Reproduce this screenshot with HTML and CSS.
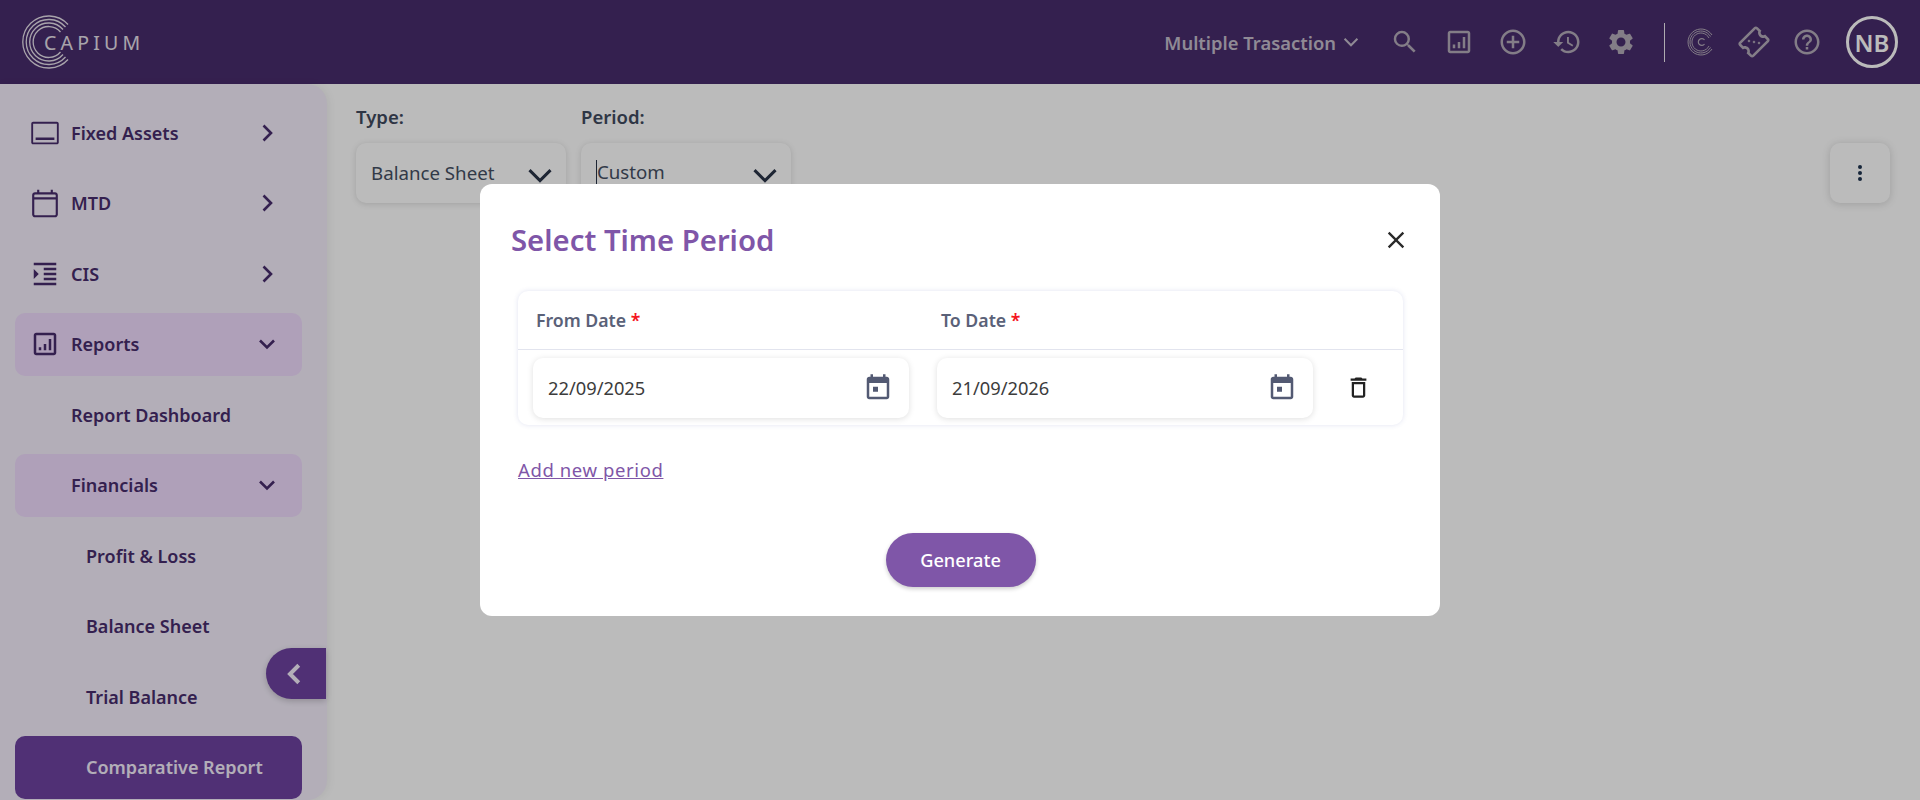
FILE: index.html
```html
<!DOCTYPE html>
<html lang="en">
<head>
    <meta charset="UTF-8">
    <title>Comparative Report</title>
    <link rel="stylesheet" href="styles.css">
</head>
<body>
    <header class="topbar">
        <div class="logo">
            <svg class="logo-rings" viewBox="0 0 54 54" fill="none" stroke="currentColor" stroke-width="1.3">
                <path d="M46 9.500A26 26 0 1 0 46 44.500"/>
                <path d="M43.500 12A22.500 22.500 0 1 0 43.500 42"/>
                <path d="M41 14.500A19 19 0 1 0 41 39.500"/>
                <path d="M38.500 17A15.500 15.500 0 1 0 38.500 37"/>
            </svg>
            <span class="logo-text">CAPIUM</span>
        </div>
        <div class="topbar-right">
            <div class="trans-menu">
                <span>Multiple Trasaction</span>
                <svg viewBox="0 0 24 24" fill="none" stroke="currentColor" stroke-width="2.200"><path d="M5 8.500l7 7 7-7"/></svg>
            </div>
            <div class="top-icons">
                <svg viewBox="0 0 24 24"><path d="M15.500 14h-.79l-.28-.27A6.471 6.471 0 0 0 16 9.500 6.500 6.500 0 1 0 9.500 16c1.610 0 3.090-.59 4.230-1.570l.27.28v.79l5 4.990L20.490 19l-4.990-5zm-6 0C7.010 14 5 11.990 5 9.500S7.010 5 9.500 5 14 7.010 14 9.500 11.990 14 9.500 14z"/></svg>
                <svg viewBox="0 0 24 24"><path d="M19 3H5c-1.100 0-2 .9-2 2v14c0 1.100.9 2 2 2h14c1.100 0 2-.9 2-2V5c0-1.100-.9-2-2-2zm0 16H5V5h14v14zM7 14h2v3H7zm4-2h2v5h-2zm4-4h2v9h-2z"/></svg>
                <svg viewBox="0 0 24 24"><path d="M13 7h-2v4H7v2h4v4h2v-4h4v-2h-4V7zm-1-5C6.480 2 2 6.480 2 12s4.480 10 10 10 10-4.480 10-10S17.520 2 12 2zm0 18c-4.410 0-8-3.590-8-8s3.590-8 8-8 8 3.590 8 8-3.590 8-8 8z"/></svg>
                <svg viewBox="0 0 24 24"><path d="M13 3c-4.970 0-9 4.030-9 9H1l3.890 3.890.07.14L9 12H6c0-3.870 3.130-7 7-7s7 3.130 7 7-3.130 7-7 7c-1.930 0-3.680-.79-4.940-2.060l-1.420 1.420C8.270 19.990 10.510 21 13 21c4.970 0 9-4.030 9-9s-4.030-9-9-9zm-1 5v5l4.280 2.540.72-1.210-3.500-2.080V8H12z"/></svg>
                <svg viewBox="0 0 24 24"><path d="M19.140 12.940c.04-.3.06-.61.06-.94 0-.32-.02-.64-.07-.94l2.030-1.580c.18-.14.23-.41.12-.61l-1.920-3.320c-.12-.22-.37-.29-.59-.22l-2.390.96c-.5-.38-1.030-.7-1.620-.94l-.36-2.540c-.04-.24-.24-.41-.48-.41h-3.840c-.24 0-.43.17-.47.41l-.36 2.540c-.59.24-1.130.57-1.620.94l-2.390-.96c-.22-.08-.47 0-.59.22L2.740 8.870c-.12.21-.08.47.12.61l2.030 1.580c-.05.3-.09.63-.09.94s.02.64.07.94l-2.030 1.580c-.18.14-.23.41-.12.61l1.920 3.320c.12.22.37.29.59.22l2.390-.96c.5.38 1.030.7 1.620.94l.36 2.540c.05.24.24.41.48.41h3.840c.24 0 .44-.17.47-.41l.36-2.540c.59-.24 1.130-.56 1.620-.94l2.390.96c.22.08.47 0 .59-.22l1.920-3.320c.12-.22.07-.47-.12-.61l-2.010-1.580zM12 15.600c-1.980 0-3.600-1.620-3.600-3.600s1.620-3.600 3.600-3.600 3.600 1.620 3.600 3.600-1.620 3.600-3.600 3.600z"/></svg>
            </div>
            <div class="top-divider"></div>
            <div class="top-icons tight">
                <svg viewBox="0 0 30 30" fill="none" stroke="currentColor" stroke-width="1">
                    <path d="M26 8A13 13 0 1 0 26 22"/>
                    <path d="M24.500 9.500A11 11 0 1 0 24.500 20.500"/>
                    <path d="M23 11A9 9 0 1 0 23 19"/>
                    <path d="M18.500 13A3.400 3.400 0 1 0 18.500 17" stroke-width="1.200"/>
                </svg>
                <svg viewBox="0 0 24 24" class="ticket"><path d="M22 10V6c0-1.110-.9-2-2-2H4c-1.100 0-1.990.89-1.990 2v4c1.100 0 1.990.9 1.990 2s-.89 2-2 2v4c0 1.100.9 2 2 2h16c1.100 0 2-.9 2-2v-4c-1.100 0-2-.9-2-2s.9-2 2-2zm-2-1.460c-1.190.69-2 1.990-2 3.460s.81 2.770 2 3.460V18H4v-2.540c1.190-.69 2-1.990 2-3.460 0-1.480-.8-2.770-1.990-3.460L4 6h16v2.540zM9 8h1.600v1.600H9zm2.200 3.200h1.600v1.600h-1.600zm2.200 3.200H15V16h-1.600z"/></svg>
                <svg viewBox="0 0 24 24"><path d="M11 18h2v-2h-2v2zm1-16C6.480 2 2 6.480 2 12s4.480 10 10 10 10-4.480 10-10S17.520 2 12 2zm0 18c-4.410 0-8-3.590-8-8s3.590-8 8-8 8 3.590 8 8-3.590 8-8 8zm0-14c-2.210 0-4 1.790-4 4h2c0-1.100.9-2 2-2s2 .9 2 2c0 2-3 1.750-3 5h2c0-2.250 3-2.500 3-5 0-2.210-1.790-4-4-4z"/></svg>
            </div>
            <div class="avatar">NB</div>
        </div>
    </header>

    <div class="page">
        <aside class="sidebar">
            <a class="nav-item">
                <svg class="nav-icon" viewBox="0 0 24 24"><path d="M21.500 3h-19C1.700 3 1 3.700 1 4.500v15c0 .8.7 1.500 1.500 1.500h19c.8 0 1.500-.7 1.500-1.500v-15C23 3.700 22.300 3 21.500 3zm0 16.500h-19v-15h19v15zM4.500 15.500h15v2h-15z"/></svg>
                <span>Fixed Assets</span>
                <svg class="nav-arrow" viewBox="0 0 24 24"><path d="M8.500 4.500l7.500 7.500-7.500 7.500"/></svg>
            </a>
            <a class="nav-item">
                <svg class="nav-icon" viewBox="1.500 1.500 21 21"><path d="M19 4.500h-1.500V2.700H16v1.800H8V2.700H6.500v1.800H5c-1.100 0-2 .9-2 2V20c0 1.100.9 2 2 2h14c1.100 0 2-.9 2-2V6.500c0-1.100-.9-2-2-2zm.5 15.500c0 .3-.2.500-.5.500H5c-.3 0-.5-.2-.5-.500V9.500h15V20zm0-12h-15V6.500c0-.3.2-.5.5-.5h14c.3 0 .5.200.5.500V8z"/></svg>
                <span>MTD</span>
                <svg class="nav-arrow" viewBox="0 0 24 24"><path d="M8.500 4.500l7.500 7.500-7.500 7.500"/></svg>
            </a>
            <a class="nav-item">
                <svg class="nav-icon" viewBox="0 0 24 24"><path d="M3 21h18v-2H3v2zM3 8v8l4-4-4-4zm8 9h10v-2H11v2zM3 3v2h18V3H3zm8 6h10V7H11v2zm0 4h10v-2H11v2z"/></svg>
                <span>CIS</span>
                <svg class="nav-arrow" viewBox="0 0 24 24"><path d="M8.500 4.500l7.500 7.500-7.500 7.500"/></svg>
            </a>
            <a class="nav-item open">
                <svg class="nav-icon" viewBox="0 0 24 24"><path d="M19 3H5c-1.100 0-2 .9-2 2v14c0 1.100.9 2 2 2h14c1.100 0 2-.9 2-2V5c0-1.100-.9-2-2-2zm0 16H5V5h14v14zM7 14.500h2V17H7zm4-2.500h2v5h-2zm4-4h2v9h-2z"/></svg>
                <span>Reports</span>
                <svg class="nav-arrow" viewBox="0 0 24 24"><path d="M5 8.500l7 7 7-7"/></svg>
            </a>
            <a class="nav-item no-icon">
                <span>Report Dashboard</span>
            </a>
            <a class="nav-item no-icon open">
                <span>Financials</span>
                <svg class="nav-arrow" viewBox="0 0 24 24"><path d="M5 8.500l7 7 7-7"/></svg>
            </a>
            <a class="nav-item sub"><span>Profit &amp; Loss</span></a>
            <a class="nav-item sub"><span>Balance Sheet</span></a>
            <a class="nav-item sub"><span>Trial Balance</span></a>
            <a class="nav-item sub active"><span>Comparative Report</span></a>

            <button class="collapse-tab">
                <svg viewBox="0 0 24 24" fill="none" stroke="currentColor" stroke-width="3.200"><path d="M15 5l-7 7 7 7"/></svg>
            </button>
        </aside>

        <main class="content">
            <div class="filter">
                <label>Type:</label>
                <div class="select">
                    <span>Balance Sheet</span>
                    <svg viewBox="0 0 24 24" fill="none" stroke="currentColor" stroke-width="2.600"><path d="M3 7l9 9 9-9"/></svg>
                </div>
            </div>
            <div class="filter">
                <label>Period:</label>
                <div class="select">
                    <span class="caret">Custom</span>
                    <svg viewBox="0 0 24 24" fill="none" stroke="currentColor" stroke-width="2.600"><path d="M3 7l9 9 9-9"/></svg>
                </div>
            </div>
            <button class="more-btn">
                <svg viewBox="0 0 24 24"><circle cx="12" cy="6" r="2"/><circle cx="12" cy="12" r="2"/><circle cx="12" cy="18" r="2"/></svg>
            </button>
        </main>
    </div>

    <div class="overlay">
        <div class="dialog">
            <div class="dialog-head">
                <h2>Select Time Period</h2>
                <svg class="close-icon" viewBox="0 0 24 24"><path d="M19 6.410L17.590 5 12 10.590 6.410 5 5 6.410 10.590 12 5 17.590 6.410 19 12 13.410 17.590 19 19 17.590 13.410 12z"/></svg>
            </div>
            <div class="period-table">
                <div class="period-head">
                    <div class="col">From Date <span class="req">*</span></div>
                    <div class="col">To Date <span class="req">*</span></div>
                </div>
                <div class="period-row">
                    <div class="date-field">
                        <span>22/09/2025</span>
                        <svg viewBox="0 0 24 24"><path d="M19 3h-1V1h-2v2H8V1H6v2H5c-1.110 0-2 .9-2 2v14c0 1.100.89 2 2 2h14c1.100 0 2-.9 2-2V5c0-1.100-.9-2-2-2zm0 16H5V8h14v11zM8 11h4v4H8z"/></svg>
                    </div>
                    <div class="date-field">
                        <span>21/09/2026</span>
                        <svg viewBox="0 0 24 24"><path d="M19 3h-1V1h-2v2H8V1H6v2H5c-1.110 0-2 .9-2 2v14c0 1.100.89 2 2 2h14c1.100 0 2-.9 2-2V5c0-1.100-.9-2-2-2zm0 16H5V8h14v11zM8 11h4v4H8z"/></svg>
                    </div>
                    <svg class="delete-icon" viewBox="0 0 24 24"><path d="M6 19c0 1.100.9 2 2 2h8c1.100 0 2-.9 2-2V7H6v12zM8 9h8v10H8V9zm7.500-5l-1-1h-5l-1 1H5v2h14V4h-3.500z"/></svg>
                </div>
            </div>
            <a class="add-link">Add new period</a>
            <div class="dialog-foot">
                <button class="generate-btn">Generate</button>
            </div>
        </div>
    </div>
</body>
</html>
```

FILE: styles.css
```css
* {
    box-sizing: border-box;
}

body {
    margin: 0;
    height: 800px;
    overflow: hidden;
    font-family: "Noto Sans", sans-serif;
    font-size: 18px;
    background: #fff;
    color: #454f63;
}

/* top bar */
.topbar {
    height: 84px;
    background: #482c6c;
    display: flex;
    align-items: center;
    justify-content: space-between;
    padding: 0 22px 0 22px;
}

.logo {
    display: flex;
    align-items: center;
    color: #e6e0ea;
}

.logo-rings {
    width: 54px;
    height: 54px;
}

.logo-text {
    margin-left: -32px;
    font-size: 19.500px;
    letter-spacing: 4.200px;
    font-weight: 400;
}

.topbar-right {
    display: flex;
    align-items: center;
}

.trans-menu {
    display: flex;
    align-items: center;
    color: #c4bdcb;
    font-weight: 600;
    font-size: 18.400px;
    margin-right: 28px;
}

.trans-menu svg {
    width: 22px;
    height: 22px;
    margin-left: 4px;
}

.top-icons {
    display: flex;
    gap: 24px;
    color: #b3abb9;
}

.top-icons.tight {
    gap: 23px;
}

.top-icons svg {
    width: 30px;
    height: 30px;
    fill: currentColor;
    display: block;
}

.top-icons svg[fill="none"] {
    fill: none;
}

.ticket {
    transform: rotate(-45deg) scale(1.050);
}

.top-divider {
    width: 1px;
    height: 39px;
    background: #fff;
    opacity: .9;
    margin: 0 21px 0 28px;
}

.avatar {
    width: 52px;
    height: 52px;
    border: 3px solid #fff;
    border-radius: 50%;
    margin-left: 24px;
    display: flex;
    align-items: center;
    justify-content: center;
    color: #fff;
    font-size: 24px;
    font-weight: 600;
}

/* page */
.page {
    display: flex;
    height: 716px;
}

.sidebar {
    position: relative;
    width: 327px;
    flex-shrink: 0;
    padding: 17px 25px 0 15px;
    background: #f4eefb;
    border-radius: 0 20px 20px 0;
    box-shadow: 2px 0 8px rgba(0, 0, 0, .06);
}

.nav-item {
    display: flex;
    align-items: center;
    height: 63px;
    margin-bottom: 7.500px;
    padding: 0 23px 0 15px;
    border-radius: 10px;
    color: #482c6c;
    font-weight: 600;
}

.nav-icon {
    width: 30px;
    height: 30px;
    fill: currentColor;
    margin-right: 11px;
    flex-shrink: 0;
}

.nav-arrow {
    width: 24px;
    height: 24px;
    margin-left: auto;
    fill: none;
    stroke: currentColor;
    stroke-width: 2.600;
}

.nav-item.open {
    background: #efdafc;
}

.nav-item.no-icon {
    padding-left: 56px;
}

.nav-item.sub {
    padding-left: 71px;
}

.nav-item.active {
    background: #6d42a0;
    color: #f4eefb;
}

.collapse-tab {
    position: absolute;
    right: 1px;
    top: 564px;
    width: 60px;
    height: 51px;
    padding: 0 2px 0 0;
    border: 0;
    border-radius: 26px 0 0 26px;
    background: #6d42a0;
    color: #f4eefb;
    display: flex;
    align-items: center;
    justify-content: center;
    box-shadow: 0 2px 6px rgba(0, 0, 0, .2);
}

.collapse-tab svg {
    width: 30px;
    height: 30px;
}

/* filters */
.content {
    flex: 1;
    display: flex;
    align-items: flex-start;
    gap: 15px;
    padding: 21px 30px 0 29px;
}

.filter label {
    display: block;
    height: 38px;
    line-height: 24px;
    font-size: 18.500px;
    font-weight: 600;
    color: #3f4a5e;
}

.select {
    width: 210px;
    height: 60px;
    padding: 0 12px 0 15px;
    border-radius: 10px;
    background: #fff;
    box-shadow: 0 1px 6px rgba(0, 0, 0, .14);
    display: flex;
    align-items: center;
    justify-content: space-between;
    font-size: 18.700px;
    color: #454f63;
}

.select span {
    margin-bottom: 2px;
}

.select svg {
    width: 28px;
    height: 28px;
    margin-top: 6px;
    color: #2a3448;
}

.caret {
    border-left: 1px solid #2a3448;
    line-height: 24px;
}

.more-btn {
    width: 60px;
    height: 60px;
    margin: 38px 0 0 auto;
    border: 0;
    border-radius: 10px;
    background: #fff;
    box-shadow: 0 1px 8px rgba(0, 0, 0, .16);
    display: flex;
    align-items: center;
    justify-content: center;
    padding: 0;
}

.more-btn svg {
    width: 24px;
    height: 24px;
    fill: #1f3350;
}

/* dialog */
.overlay {
    position: fixed;
    top: 0;
    left: 0;
    width: 100%;
    height: 100%;
    background: rgba(0, 0, 0, .267);
    display: flex;
    align-items: center;
    justify-content: center;
}

.dialog {
    width: 960px;
    height: 432px;
    padding: 0 37px 0 38px;
    background: #fff;
    border-radius: 12px;
}

.dialog-head {
    height: 107px;
    padding-top: 5px;
    margin-left: -7px;
    display: flex;
    align-items: center;
    justify-content: space-between;
}

.dialog-head h2 {
    margin: 0;
    font-size: 29.300px;
    font-weight: 600;
    color: #7f56a8;
}

.close-icon {
    width: 28px;
    height: 28px;
    margin-right: -7px;
    fill: #2a2a2a;
}

.period-table {
    border-radius: 10px;
    box-shadow: 0 0 5px rgba(70, 80, 170, .16);
    height: 134px;
}

.period-head {
    height: 59px;
    border-bottom: 1px solid #e2e4ee;
    display: grid;
    grid-template-columns: 405px 300px;
    padding-left: 18px;
    align-items: center;
    font-size: 17.700px;
    color: #5a6178;
    font-weight: 600;
}

.req {
    color: #f5141e;
}

.period-row {
    display: flex;
    align-items: center;
    height: 75px;
    padding-left: 15px;
    gap: 28px;
}

.date-field {
    width: 376px;
    height: 60px;
    padding: 0 16px 0 15px;
    border-radius: 10px;
    box-shadow: 0 1px 6px rgba(0, 0, 0, .13);
    display: flex;
    align-items: center;
    justify-content: space-between;
    font-size: 18.300px;
    color: #3c3c3c;
}

.date-field svg {
    width: 30px;
    height: 30px;
    fill: #535a73;
}

.delete-icon {
    width: 27px;
    height: 27px;
    margin-left: 4px;
    fill: #222;
}

.add-link {
    display: block;
    margin-top: 32px;
    line-height: 26px;
    font-size: 18.500px;
    letter-spacing: .6px;
    color: #7f56a8;
    text-decoration: underline;
}

.dialog-foot {
    display: flex;
    justify-content: center;
    margin-top: 50px;
}

.generate-btn {
    width: 150px;
    height: 54px;
    border: 0;
    border-radius: 27px;
    background: #7f56a8;
    color: #fff;
    font-family: inherit;
    font-size: 18.200px;
    font-weight: 500;
    box-shadow: 0 2px 4px rgba(0, 0, 0, .2);
}
```
